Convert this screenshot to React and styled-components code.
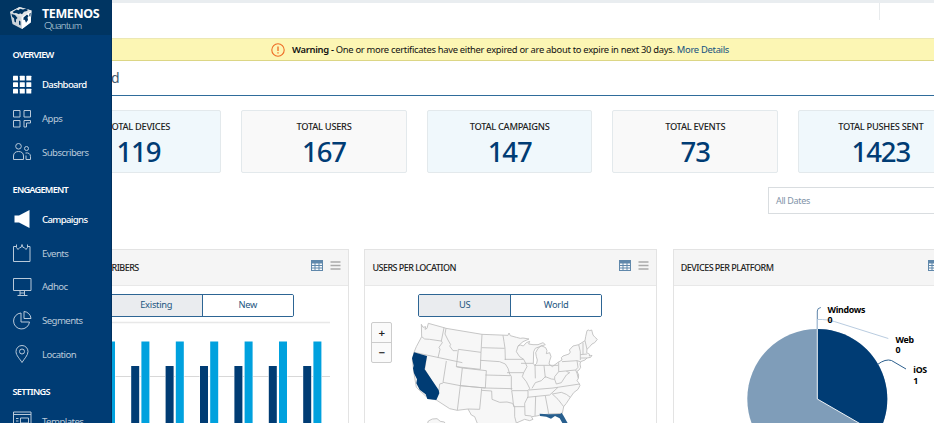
import React from 'react';
import styled, { createGlobalStyle } from 'styled-components';

const GlobalStyle = createGlobalStyle`
  * { box-sizing: border-box; }
  html, body { margin: 0; overflow: hidden; background: #fff; }
  body { font-family: 'Noto Sans', 'Open Sans', sans-serif; font-size: 10px; color: #222; }
  #root { height: 423px; }
`;

const Page = styled.div`
  position: relative;
  width: 934px;
  height: 423px;
  overflow: hidden;
`;

/* The navigation drawer lies over the left edge of the dashboard. */
const Sidebar = styled.nav`
  position: absolute;
  inset: 0 auto 0 0;
  z-index: 2;
  width: 112px;
  overflow: hidden;
  background: #003c74;
  border-right: 1px solid #00305f;
  color: #fff;
`;

const Brand = styled.div`
  display: flex;
  align-items: flex-start;
  gap: 9px;
  height: 35px;
  padding: 6px 0 0 9px;
  background: #003562;
`;

const BrandText = styled.div`
  padding-top: 2px;
`;

const BrandName = styled.div`
  font-size: 12.5px;
  line-height: 11px;
  font-weight: 700;
  letter-spacing: -0.4px;
  white-space: nowrap;
`;

const BrandProduct = styled.div`
  padding-left: 2px;
  font-family: Lato, sans-serif;
  font-size: 10.5px;
  line-height: 12px;
  font-weight: 300;
  letter-spacing: -0.75px;
  color: #d5e0ea;
`;

const GroupTitle = styled.h2`
  height: 33.5px;
  margin: 0;
  padding-left: 12.5px;
  font-size: 9.2px;
  line-height: 40px;
  font-weight: 600;
  letter-spacing: -0.75px;
`;

const NavItem = styled.a`
  display: flex;
  align-items: center;
  gap: 10px;
  height: 33.7px;
  padding: 0 0 1px 12px;
  font-size: 9.6px;
  letter-spacing: ${(p) => (p.$active ? '-0.65px' : '-0.55px')};
  color: ${(p) => (p.$active ? '#fff' : '#b9c9d9')};
  font-weight: ${(p) => (p.$active ? 500 : 400)};
  svg { flex: none; width: 20px; height: 20px; }
`;

const Main = styled.main`
  width: 1020px;
`;

const TopBar = styled.header`
  display: flex;
  height: 38px;
  padding-left: 879px;
  border-top: 3px solid #e9edf0;
`;

const TopDivider = styled.span`
  width: 1px;
  height: 17px;
  background: #e8ebed;
`;

const Banner = styled.div`
  display: flex;
  align-items: center;
  height: 23px;
  padding-left: 271px;
  border-top: 1px solid #ece8b4;
  border-bottom: 1px solid #dcd685;
  background: #fcf6b4;
  color: #111;
  white-space: nowrap;
`;

const BannerText = styled.span`
  padding-left: 7px;
  font-size: 9.4px;
  line-height: 20px;
  letter-spacing: -0.287px;
  b { font-weight: 600; }
  a { color: #14517f; }
`;

const PageTitle = styled.h1`
  height: 35px;
  margin: 0;
  padding-left: 52.3px;
  border-bottom: 1px solid #2f6c9b;
  font-size: 14px;
  line-height: 34px;
  font-weight: 400;
  letter-spacing: -0.65px;
  color: #44586b;
`;

const Stats = styled.section`
  display: grid;
  grid-template-columns: repeat(5, 165.5px);
  gap: 20.1px;
  padding: 14px 0 0 55.7px;
`;

const StatCard = styled.div`
  height: 63px;
  padding-top: 9px;
  border: 1px solid #e3e9ec;
  border-radius: 2px;
  background: ${(p) => (p.$tinted ? '#f0f8fc' : '#f9f9f9')};
  text-align: center;
`;

const StatLabel = styled.div`
  font-size: 9.3px;
  line-height: 13px;
  letter-spacing: -0.3px;
  font-weight: 500;
`;

const StatValue = styled.div`
  font-size: 27.5px;
  line-height: 37px;
  font-weight: 500;
  letter-spacing: -1.1px;
  color: #003c74;
`;

const DateFilter = styled.div`
  width: 200px;
  height: 27px;
  margin: 14px 0 0 768px;
  padding-left: 7px;
  border: 1px solid #d9dde0;
  font-size: 9px;
  line-height: 25px;
  letter-spacing: -0.35px;
  color: #7f93a8;
`;

const Panels = styled.section`
  display: grid;
  grid-template-columns: repeat(3, 293px);
  gap: 15.4px;
  padding: 35px 0 0 56px;
`;

const Panel = styled.article`
  height: 200px;
  border: 1px solid #e3e3e3;
`;

const PanelHeader = styled.header`
  display: flex;
  align-items: center;
  gap: 7px;
  height: 36px;
  padding: 0 7px 0 7px;
  border-bottom: 1px solid #e8e8e8;
  background: #f5f5f5;
  svg { margin-top: -4px; flex: none; }
`;

const PanelTitle = styled.h3`
  flex: 1;
  margin: 0;
  font-size: 9px;
  font-weight: 500;
  letter-spacing: -0.53px;
  white-space: nowrap;
`;

const Toggle = styled.div`
  display: flex;
  width: 184px;
  height: 23px;
  margin: 8px 0 0 53px;
  overflow: hidden;
  border: 1px solid #2d6594;
  border-radius: 2px;
`;

const ToggleOption = styled.button`
  flex: 1;
  padding: 0 0 2px;
  border: 0;
  border-left: ${(p) => (p.$selected ? '0' : '1px solid #2d6594')};
  background: ${(p) => (p.$selected ? '#eaecef' : '#fff')};
  font: inherit;
  font-size: 9.3px;
  line-height: 19px;
  letter-spacing: -0.25px;
  color: #24567f;
`;

const ChartSvg = styled.svg`
  display: block;
`;

const MapArea = styled.div`
  display: flex;
  align-items: flex-start;
  padding: 5px 0 0 6px;
`;

const ZoomControl = styled.div`
  display: flex;
  flex-direction: column;
  flex: none;
  width: 21px;
  height: 41px;
  border: 1px solid #ccc;
  border-radius: 2px;
  background: #fafafa;
`;

const ZoomButton = styled.button`
  flex: 1;
  padding: 0;
  border: 0;
  background: transparent;
  font: 600 11.5px/18px 'Noto Sans', sans-serif;
  color: #222;
  & + & { border-top: 1px solid #ccc; }
`;

const icons = {
  dashboard: (
    <g fill="#fff" stroke="none">
      {[1, 7.8, 14.3].flatMap((x) => [0.8, 7.3, 13.8].map((y) => <rect key={`${x}-${y}`} x={x} y={y} width="5" height="4.8" rx=".4" />))}
    </g>
  ),
  apps: <path d="M1.500 1.500h6.500v6.500h-6.500zM12 1.500h6.500v6.500h-6.500zM1.500 11.500h6.500v6.500h-6.500zM12 18v-6.500h6.500v2.500h-4v4z" />,
  subscribers: <path d="M6.500 1.500a2.800 2.800 0 1 1 0 5.600a2.800 2.800 0 0 1 0-5.600M1.500 17.500v-3.500c0-3 2-4.500 5-4.500s5 1.500 5 4.500v3.500zM14.500 4.500a2 2 0 1 1 0 4a2 2 0 0 1 0-4M13.500 11c3-.5 5 .8 5 3.500v3h-4.500v-4" />,
  campaigns: <path fill="#fff" stroke="none" d="M2.500 6.500h4.500l10.500-5.500v18l-10.500-5.500h-4.500z" />,
  events: <path d="M4 3.500h-2.500v15h16.500v-15h-2.500M4.500 1.500v3l1.500 2 1.800-2h1.200l1-3 1 3h1.200l1.800 2 1.500-2v-3" />,
  adhoc: <path d="M1.500 1.500h17.500v12h-17.500zM8 13.500v4.500M12.500 18v-4.500M8 16h4.500M5.500 18.500h10" />,
  segments: <path d="M9 3a8 8 0 1 0 8.500 9h-8.500zM12 1.500v7h7a7.500 7.500 0 0 0-7-7z" />,
  location: <path d="M10 18.500c-2-3.500-6-7-6-11a6 6 0 0 1 12 0c0 4-4 7.500-6 11zM10 5a2.500 2.500 0 1 1 0 5a2.500 2.500 0 0 1 0-5" />,
  templates: <path d="M1.500 1h17.500v18.500h-17.500zM1.500 3.500h17.500M8.500 7h8v5h-8zM4 7.500h2.500M4 10h2.500" />,
};

const NavIcon = ({ name }) => (
  <svg viewBox="0 0 20 20" fill="none" stroke="#b9c9d9" strokeWidth="1">{icons[name]}</svg>
);

const CubeLogo = () => (
  <svg width="24" height="24" viewBox="0 0 24 24">
    <path fill="#cdd4da" d="M1 6L10.500 1l12 3.500-.8 12-8.700 6.500-9.500-5z" />
    <path fill="#fff" d="M12.500 11l10-6.500-.8 12-8.700 6.500z" />
    <path fill="#e1e5e8" d="M1 6l9.500-5 12 3.500-10 6.500z" />
    <path fill="#003562" d="M3.500 6l4-2.500 2 .8 1.500-1.500 3 .8 2.500-.8 2.500 1-1 1.200-3 .8-2 2.500-2-1-1 1-3-1.200-2 .2zM2.500 8l3.500 1 2.500 3-1.500 1.500v3l-1.500-.8-.5-3.500-1.800-1.500zM14.500 11.500l3.500-3 1.500 1.500-1 1.500.5 2.500-2 2.800-1.200-3-1.300.2zM10 14.500l1.500 1v4l-1.500-1zM20.500 7.500l1.200-.8-.4 4-1-.7z" />
  </svg>
);

const AlertIcon = () => (
  <svg width="14" height="14" viewBox="0 0 14 14" fill="none" stroke="#ee6b24" strokeWidth="1.100">
    <circle cx="7" cy="7" r="6.200" />
    <path d="M7 3.500v4.500M7 9.300v1.300" strokeWidth="1.300" />
  </svg>
);

const TableIcon = () => (
  <svg width="12" height="11" viewBox="0 0 12 11">
    <rect width="12" height="11" fill="#6088ab" />
    <path fill="#f8fafb" d="M1 3.500h2.500v1.500h-2.500zM4.500 3.500h3v1.500h-3zM8.500 3.500h2.500v1.500h-2.500zM1 6h2.500v1.500h-2.500zM4.500 6h3v1.500h-3zM8.500 6h2.500v1.500h-2.500zM1 8.500h2.500v1.500h-2.500zM4.500 8.500h3v1.500h-3zM8.500 8.500h2.500v1.500h-2.500z" />
  </svg>
);

const MenuIcon = () => (
  <svg width="11" height="9" viewBox="0 0 11 9"><path d="M.5 1h10M.5 4.500h10M.5 8h10" stroke="#aaa" strokeWidth="1.400" /></svg>
);

const months = [0, 1, 2, 3, 4, 5, 6];

const BarChart = () => (
  <ChartSvg width="291" height="110" viewBox="57 317 291 110">
    <path d="M57 322.500h273" stroke="#e8e8e8" strokeWidth="1.500" />
    <path d="M57 376.500h273" stroke="#d8d8d8" />
    {months.map((m) => (
      <React.Fragment key={m}>
        <rect x={96.300 + m * 34.400} y="365.500" width="9" height="70" fill="#fff" />
        <rect x={106.500 + m * 34.400} y="341" width="9" height="90" fill="#fff" />
        <rect x={96.800 + m * 34.400} y="366" width="8" height="70" fill="#003c74" />
        <rect x={107 + m * 34.400} y="341.500" width="8" height="90" fill="#00a1de" />
      </React.Fragment>
    ))}
  </ChartSvg>
);

const outline = 'M65 43L70 52 78 50 76 58 82 55 86 40 133 53 139 55 247 73 325 76 328 69 332 77 350 82 362 85 370 84 388 87 370 95 355 108 362 105 371 108 380 98 390 94 387 102 400 104 415 104 430 98 437 104 420 110 407 115 402 125 401 160 405 166 411 160 413 150 410 140 408 128 415 115 425 107 438 113 442 122 440 131 450 128 454 140 450 152 448 162 458 170 475 157 487 150 485 143 490 138 508 132 512 126 509 120 520 108 537 104 556 92 558 80 562 62 566 60 570 62 576 60 580 75 586 82 593 88 585 98 577 102 570 110 562 118 561 128 570 133 569 138 577 136 573 142 562 144 556 150 543 155 541 162 543 172 538 180 532 184 537 195 536 205 532 212 537 218 541 226 535 238 522 248 515 258 512 262 500 280 492 290 488 310 447 312 420 316 405 319 395 320 400 328 390 332 375 328 350 339 350 360 240 360 235 345 225 320 215 315 205 297 173 301 150 296 110 270 83 263 50 232 43 190 38 150 43 127 50 110 66 80z';
const borders = 'M66 80L75 87 90 88 124 93M133 53L125 93 128 98 118 112 121 118 115 143M43 127L188 158M139 55L136 72 145 90 153 104 150 108 160 122 173 122M176 118L244 127 242 178 170 170zM247 73L244 127M246 113L315 115M310 76L313 95 316 115 317 150M242 151L300 155 317 162 325 175 330 192 335 199 335 240M170 170L188 174 260 182 257 234 182 227 188 174M140 153L130 217 182 227 173 301M81 138L75 178 117 247 120 222 130 219M257 195L333 197M182 227L257 234 338 236M246 235L240 298 205 297M246 241L276 243 277 268 300 277 322 276 338 280 345 290 345 320 350 339M315 148L372 148 378 160 382 170 372 188 322 188M372 188L368 200 380 215 390 235 385 242 336 242 338 255 342 290 375 290M385 242L385 260 375 280 376 316 395 318M355 108L350 125 360 140 372 148M364 160L400 160M407 205L406 165M433 167L437 203M405 166L475 166M388 240L460 234 540 222M397 235L407 218 425 212 437 200 455 207 465 208 470 222 485 218 500 195 510 188 500 184M465 208L465 200 477 185 477 157M477 185L528 180 535 172 532 152 487 155M382 262L450 255 475 232M408 258L406 318M437 258L445 300 447 312M458 252L475 268 492 290M458 252L485 247 500 253 512 262M537 104L542 125 542 150M542 134L562 132M543 144L562 144M550 98L550 132M556 92L562 118M528 180L532 190 536 205M532 152L542 155';

const UsMap = () => (
  <ChartSvg width="250" height="106" viewBox="-23 36 750 318" strokeLinejoin="round">
    <path d={outline} fill="#f7f7f7" stroke="#bcbcbc" strokeWidth="2.500" />
    <path d={borders} fill="none" stroke="#bcbcbc" strokeWidth="2.500" />
    <path d="M86 333L98 327 112 326 122 334 134 336 142 351 80 351z" fill="#f7f7f7" stroke="#bcbcbc" strokeWidth="2.500" />
    <path d="M43 127L82 138 75 178 117 240 119 250 110 270 83 267 78 253 60 239 50 220 52 208 43 190 40 175 42 167 37 145z" fill="#003c74" />
    <path d="M420 311L446 313 482 312 486 308 492 318 506 343 510 360 500 360 480 325 466 318 454 326 440 320 421 318z" fill="#285f8e" />
  </ChartSvg>
);

const PieLabel = styled.text`
  font-size: 8.8px;
  font-weight: 700;
  letter-spacing: -0.3px;
  fill: #000;
`;

const PieChart = () => (
  <ChartSvg width="291" height="140" viewBox="674 286 291 140" fill="none">
    <circle cx="817.300" cy="399" r="70" fill="#7f9db9" />
    <path d="M817.300 399V329a70 70 0 0 1 60.600 105z" fill="#003c74" />
    <path d="M817.300 329v70l60.600 35" stroke="#eef3f7" strokeWidth="1" />
    <path d="M817.300 329V311q0-3 3.500-3.500" stroke="#5c83a8" />
    <path d="M817.300 329V319.500h5q5 0 12 2l54 17" stroke="#b9cce0" />
    <path d="M877.500 364.500q8-6 14-4l14.500 8.500" stroke="#2d608e" />
    <PieLabel x="827.500" y="312.800">Windows</PieLabel>
    <PieLabel x="827.500" y="323">0</PieLabel>
    <PieLabel x="895.500" y="342.600">Web</PieLabel>
    <PieLabel x="895.500" y="353">0</PieLabel>
    <PieLabel x="913.300" y="373">iOS</PieLabel>
    <PieLabel x="913.300" y="383.500">1</PieLabel>
  </ChartSvg>
);

const menu = [
  { title: 'OVERVIEW', items: [['dashboard', 'Dashboard', true], ['apps', 'Apps'], ['subscribers', 'Subscribers']] },
  { title: 'ENGAGEMENT', items: [['campaigns', 'Campaigns', true], ['events', 'Events'], ['adhoc', 'Adhoc'], ['segments', 'Segments'], ['location', 'Location']] },
  { title: 'SETTINGS', items: [['templates', 'Templates']] },
];

const stats = [['TOTAL DEVICES', 119], ['TOTAL USERS', 167], ['TOTAL CAMPAIGNS', 147], ['TOTAL EVENTS', 73], ['TOTAL PUSHES SENT', 1423]];

const DashboardPanel = ({ title, children }) => (
  <Panel>
    <PanelHeader><PanelTitle>{title}</PanelTitle><TableIcon /><MenuIcon /></PanelHeader>
    {children}
  </Panel>
);

const Switcher = ({ options }) => (
  <Toggle>{options.map((o, i) => <ToggleOption key={o} $selected={i === 0}>{o}</ToggleOption>)}</Toggle>
);

export default function App() {
  return (
    <Page>
      <GlobalStyle />
      <Sidebar>
        <Brand>
          <CubeLogo />
          <BrandText><BrandName>TEMENOS</BrandName><BrandProduct>Quantum</BrandProduct></BrandText>
        </Brand>
        {menu.map((group) => (
          <React.Fragment key={group.title}>
            <GroupTitle>{group.title}</GroupTitle>
            {group.items.map(([icon, label, active]) => (
              <NavItem key={label} $active={active}><NavIcon name={icon} />{label}</NavItem>
            ))}
          </React.Fragment>
        ))}
      </Sidebar>
      <Main>
        <TopBar><TopDivider /></TopBar>
        <Banner>
          <AlertIcon />
          <BannerText><b>Warning - </b>One or more certificates have either expired or are about to expire in next 30 days. <a>More Details</a></BannerText>
        </Banner>
        <PageTitle>Dashboard</PageTitle>
        <Stats>
          {stats.map(([label, value], i) => (
            <StatCard key={label} $tinted={i % 2 === 0}><StatLabel>{label}</StatLabel><StatValue>{value}</StatValue></StatCard>
          ))}
        </Stats>
        <DateFilter>All Dates</DateFilter>
        <Panels>
          <DashboardPanel title="USER SUBSCRIBERS"><Switcher options={['Existing', 'New']} /><BarChart /></DashboardPanel>
          <DashboardPanel title="USERS PER LOCATION">
            <Switcher options={['US', 'World']} />
            <MapArea>
              <ZoomControl><ZoomButton>+</ZoomButton><ZoomButton>−</ZoomButton></ZoomControl>
              <UsMap />
            </MapArea>
          </DashboardPanel>
          <DashboardPanel title="DEVICES PER PLATFORM"><PieChart /></DashboardPanel>
        </Panels>
      </Main>
    </Page>
  );
}
